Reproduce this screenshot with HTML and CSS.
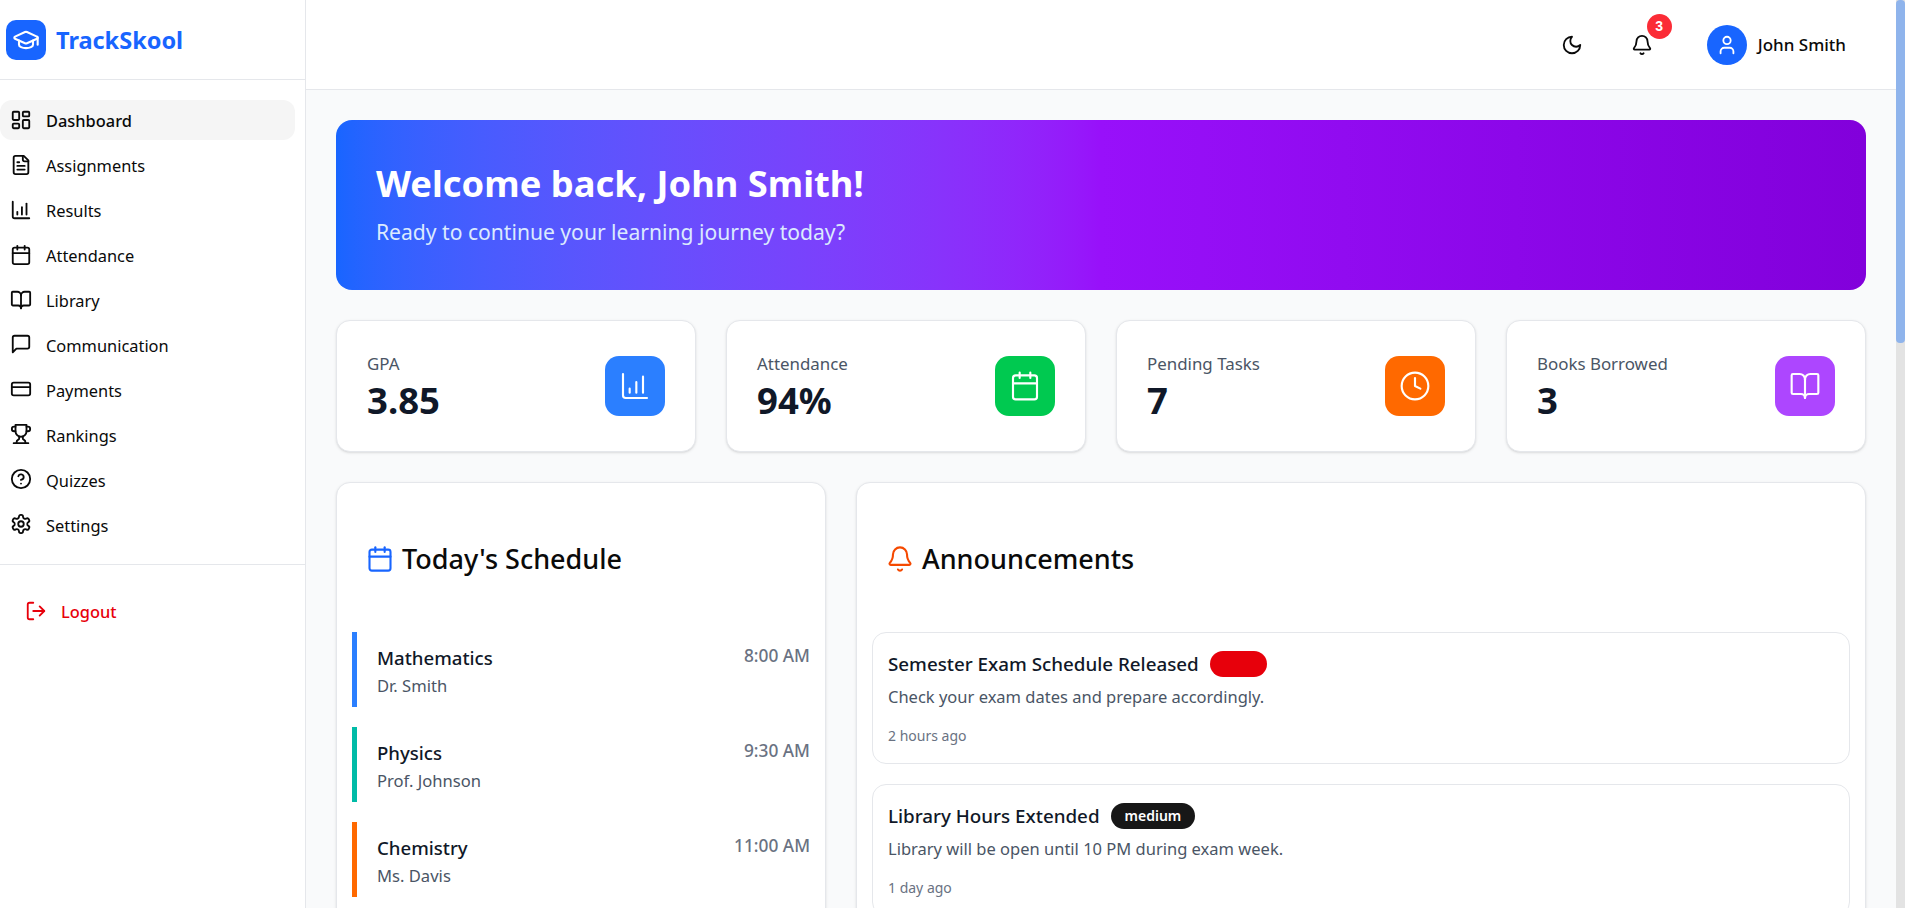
FILE: index.html
```html
<!DOCTYPE html>
<html lang="en">
<head>
	<meta charset="UTF-8">
	<title>TrackSkool</title>
	<link rel="stylesheet" href="styles.css">
</head>
<body>
<div class="app">
	<aside class="sidebar">
		<div class="brand">
			<span class="brand-logo">
				<svg class="icon-28" viewBox="0 0 24 24"><path d="M21.42 10.92a1 1 0 0 0-.02-1.84l-8.57-3.9a2 2 0 0 0-1.66 0l-8.57 3.9a1 1 0 0 0 0 1.83l8.57 3.91a2 2 0 0 0 1.66 0z"/><path d="M22 10v6"/><path d="M6 12.5V16a6 3 0 0 0 12 0v-3.5"/></svg>
			</span>
			<span class="brand-name">TrackSkool</span>
		</div>
		<nav class="nav">
			<a class="nav-item active"><svg class="icon-22" viewBox="0 0 24 24"><rect x="3" y="3" width="7" height="9" rx="1"/><rect x="14" y="3" width="7" height="5" rx="1"/><rect x="14" y="12" width="7" height="9" rx="1"/><rect x="3" y="16" width="7" height="5" rx="1"/></svg><span>Dashboard</span></a>
			<a class="nav-item"><svg class="icon-22" viewBox="0 0 24 24"><path d="M15 2H6a2 2 0 0 0-2 2v16a2 2 0 0 0 2 2h12a2 2 0 0 0 2-2V7z"/><path d="M14 2v4a2 2 0 0 0 2 2h4"/><path d="M10 9H8"/><path d="M16 13H8"/><path d="M16 17H8"/></svg><span>Assignments</span></a>
			<a class="nav-item"><svg class="icon-22" viewBox="0 0 24 24"><path d="M3 3v16a2 2 0 0 0 2 2h16"/><path d="M8 17v-3"/><path d="M13 17V9"/><path d="M18 17V5"/></svg><span>Results</span></a>
			<a class="nav-item"><svg class="icon-22" viewBox="0 0 24 24"><path d="M8 2v4"/><path d="M16 2v4"/><rect x="3" y="4" width="18" height="18" rx="2"/><path d="M3 10h18"/></svg><span>Attendance</span></a>
			<a class="nav-item"><svg class="icon-22" viewBox="0 0 24 24"><path d="M12 7v14"/><path d="M3 18a1 1 0 0 1-1-1V4a1 1 0 0 1 1-1h5a4 4 0 0 1 4 4 4 4 0 0 1 4-4h5a1 1 0 0 1 1 1v13a1 1 0 0 1-1 1h-6a3 3 0 0 0-3 3 3 3 0 0 0-3-3z"/></svg><span>Library</span></a>
			<a class="nav-item"><svg class="icon-22" viewBox="0 0 24 24"><path d="M21 15a2 2 0 0 1-2 2H7l-4 4V5a2 2 0 0 1 2-2h14a2 2 0 0 1 2 2z"/></svg><span>Communication</span></a>
			<a class="nav-item"><svg class="icon-22" viewBox="0 0 24 24"><rect x="2" y="5" width="20" height="14" rx="2"/><path d="M2 10h20"/></svg><span>Payments</span></a>
			<a class="nav-item"><svg class="icon-22" viewBox="0 0 24 24"><path d="M6 9H4.5a2.5 2.5 0 0 1 0-5H6"/><path d="M18 9h1.5a2.5 2.5 0 0 0 0-5H18"/><path d="M4 22h16"/><path d="M10 14.66V17c0 .55-.47.98-.97 1.21C7.85 18.75 7 20.24 7 22"/><path d="M14 14.66V17c0 .55.47.98.97 1.21C16.15 18.75 17 20.24 17 22"/><path d="M18 2H6v7a6 6 0 0 0 12 0V2Z"/></svg><span>Rankings</span></a>
			<a class="nav-item"><svg class="icon-22" viewBox="0 0 24 24"><circle cx="12" cy="12" r="10"/><path d="M9.09 9a3 3 0 0 1 5.83 1c0 2-3 3-3 3"/><path d="M12 17h.01"/></svg><span>Quizzes</span></a>
			<a class="nav-item"><svg class="icon-22" viewBox="0 0 24 24"><path d="M12.22 2h-.44a2 2 0 0 0-2 2v.18a2 2 0 0 1-1 1.73l-.43.25a2 2 0 0 1-2 0l-.15-.08a2 2 0 0 0-2.73.73l-.22.38a2 2 0 0 0 .73 2.73l.15.1a2 2 0 0 1 1 1.72v.51a2 2 0 0 1-1 1.74l-.15.09a2 2 0 0 0-.73 2.73l.22.38a2 2 0 0 0 2.73.73l.15-.08a2 2 0 0 1 2 0l.43.25a2 2 0 0 1 1 1.73V20a2 2 0 0 0 2 2h.44a2 2 0 0 0 2-2v-.18a2 2 0 0 1 1-1.73l.43-.25a2 2 0 0 1 2 0l.15.08a2 2 0 0 0 2.73-.73l.22-.39a2 2 0 0 0-.73-2.73l-.15-.08a2 2 0 0 1-1-1.74v-.5a2 2 0 0 1 1-1.74l.15-.09a2 2 0 0 0 .73-2.73l-.22-.38a2 2 0 0 0-2.73-.73l-.15.08a2 2 0 0 1-2 0l-.43-.25a2 2 0 0 1-1-1.73V4a2 2 0 0 0-2-2z"/><circle cx="12" cy="12" r="3"/></svg><span>Settings</span></a>
		</nav>
		<div class="logout-wrap">
			<a class="logout"><svg class="icon-22" viewBox="0 0 24 24"><path d="M9 21H5a2 2 0 0 1-2-2V5a2 2 0 0 1 2-2h4"/><path d="m16 17 5-5-5-5"/><path d="M21 12H9"/></svg>Logout</a>
		</div>
	</aside>

	<div class="content">
		<header class="topbar">
			<button class="top-btn"><svg class="icon-22" viewBox="0 0 24 24"><path d="M12 3a6 6 0 0 0 9 9 9 9 0 1 1-9-9Z"/></svg></button>
			<button class="top-btn bell">
				<svg class="icon-22" viewBox="0 0 24 24"><path d="M10.268 21a2 2 0 0 0 3.464 0"/><path d="M3.262 15.326A1 1 0 0 0 4 17h16a1 1 0 0 0 .74-1.673C19.41 13.956 18 12.499 18 8A6 6 0 0 0 6 8c0 4.499-1.411 5.956-2.738 7.326"/></svg>
				<span class="badge-count">3</span>
			</button>
			<div class="user">
				<span class="avatar"><svg class="icon-22" viewBox="0 0 24 24"><path d="M19 21v-2a4 4 0 0 0-4-4H9a4 4 0 0 0-4 4v2"/><circle cx="12" cy="7" r="4"/></svg></span>
				<span class="user-name">John Smith</span>
			</div>
		</header>

		<main class="main">
			<section class="welcome">
				<h1>Welcome back, John Smith!</h1>
				<p>Ready to continue your learning journey today?</p>
			</section>

			<section class="stats">
				<div class="stat">
					<div><div class="stat-label">GPA</div><div class="stat-value">3.85</div></div>
					<span class="stat-icon blue"><svg class="icon-32" viewBox="0 0 24 24"><path d="M3 3v16a2 2 0 0 0 2 2h16"/><path d="M8 17v-3"/><path d="M13 17V9"/><path d="M18 17V5"/></svg></span>
				</div>
				<div class="stat">
					<div><div class="stat-label">Attendance</div><div class="stat-value">94%</div></div>
					<span class="stat-icon green"><svg class="icon-32" viewBox="0 0 24 24"><path d="M8 2v4"/><path d="M16 2v4"/><rect x="3" y="4" width="18" height="18" rx="2"/><path d="M3 10h18"/></svg></span>
				</div>
				<div class="stat">
					<div><div class="stat-label">Pending Tasks</div><div class="stat-value">7</div></div>
					<span class="stat-icon orange"><svg class="icon-32" viewBox="0 0 24 24"><circle cx="12" cy="12" r="10"/><path d="M12 6v6l4 2"/></svg></span>
				</div>
				<div class="stat">
					<div><div class="stat-label">Books Borrowed</div><div class="stat-value">3</div></div>
					<span class="stat-icon purple"><svg class="icon-32" viewBox="0 0 24 24"><path d="M12 7v14"/><path d="M3 18a1 1 0 0 1-1-1V4a1 1 0 0 1 1-1h5a4 4 0 0 1 4 4 4 4 0 0 1 4-4h5a1 1 0 0 1 1 1v13a1 1 0 0 1-1 1h-6a3 3 0 0 0-3 3 3 3 0 0 0-3-3z"/></svg></span>
				</div>
			</section>

			<section class="columns">
				<div class="panel">
					<h2 class="panel-title"><svg class="icon-28 c-blue" viewBox="0 0 24 24"><path d="M8 2v4"/><path d="M16 2v4"/><rect x="3" y="4" width="18" height="18" rx="2"/><path d="M3 10h18"/></svg>Today's Schedule</h2>
					<div class="panel-body schedule">
						<div class="lesson l-blue">
							<div><div class="lesson-name">Mathematics</div><div class="lesson-teacher">Dr. Smith</div></div>
							<div class="lesson-time">8:00 AM</div>
						</div>
						<div class="lesson l-teal">
							<div><div class="lesson-name">Physics</div><div class="lesson-teacher">Prof. Johnson</div></div>
							<div class="lesson-time">9:30 AM</div>
						</div>
						<div class="lesson l-orange">
							<div><div class="lesson-name">Chemistry</div><div class="lesson-teacher">Ms. Davis</div></div>
							<div class="lesson-time">11:00 AM</div>
						</div>
					</div>
				</div>
				<div class="panel">
					<h2 class="panel-title"><svg class="icon-28 c-orange" viewBox="0 0 24 24"><path d="M10.268 21a2 2 0 0 0 3.464 0"/><path d="M3.262 15.326A1 1 0 0 0 4 17h16a1 1 0 0 0 .74-1.673C19.41 13.956 18 12.499 18 8A6 6 0 0 0 6 8c0 4.499-1.411 5.956-2.738 7.326"/></svg>Announcements</h2>
					<div class="panel-body notes">
						<div class="note">
							<div class="note-head"><span class="note-title">Semester Exam Schedule Released</span><span class="tag tag-high"></span></div>
							<p class="note-text">Check your exam dates and prepare accordingly.</p>
							<div class="note-time">2 hours ago</div>
						</div>
						<div class="note">
							<div class="note-head"><span class="note-title">Library Hours Extended</span><span class="tag tag-medium">medium</span></div>
							<p class="note-text">Library will be open until 10 PM during exam week.</p>
							<div class="note-time">1 day ago</div>
						</div>
					</div>
				</div>
			</section>
		</main>
	</div>

	<div class="scrollbar"><div class="scrollbar-thumb"></div></div>
</div>
</body>
</html>
```

FILE: styles.css
```css
* {
	margin: 0;
	padding: 0;
	box-sizing: border-box;
}
html, body {
	height: 100%;
	overflow: hidden;
}
body {
	font-family: "Noto Sans", "Open Sans", sans-serif;
	color: #0a0a0a;
	background: #f9fafb;
}
svg {
	fill: none;
	stroke: currentColor;
	stroke-width: 2;
	stroke-linecap: round;
	stroke-linejoin: round;
	flex-shrink: 0;
}
.icon-22 { width: 22px; height: 22px; }
.icon-28 { width: 28px; height: 28px; stroke-width: 1.8; }
.icon-32 { width: 32px; height: 32px; stroke-width: 1.6; }
.c-blue { color: #1865ff; }
.c-orange { color: #f54900; }

.app {
	display: flex;
	height: 908px;
	overflow: hidden;
}

/* sidebar */
.sidebar {
	width: 306px;
	flex-shrink: 0;
	background: #fff;
	border-right: 1px solid #e5e7eb;
}
.brand {
	display: flex;
	align-items: center;
	gap: 10px;
	height: 80px;
	padding-left: 6px;
	border-bottom: 1px solid #e5e7eb;
}
.brand-logo {
	display: flex;
	align-items: center;
	justify-content: center;
	width: 40px;
	height: 40px;
	border-radius: 10px;
	background: #1865ff;
	color: #fff;
}
.brand-name {
	font-size: 23.5px;
	font-weight: 700;
	color: #1865ff;
}
.nav {
	display: flex;
	flex-direction: column;
	gap: 5px;
	height: 485px;
	padding: 20px 10px 20px 0;
	border-bottom: 1px solid #e5e7eb;
}
.nav-item {
	display: flex;
	align-items: center;
	gap: 14px;
	height: 40px;
	padding-left: 10px;
	border-radius: 12px;
	font-size: 16.4px;
	color: #0a0a0a;
}
.nav-item span {
	padding-top: 2px;
}
.nav-item.active {
	background: #f5f5f5;
	font-weight: 500;
}
.logout-wrap {
	padding: 26px 25px;
}
.logout {
	display: flex;
	align-items: center;
	gap: 14px;
	height: 40px;
	font-size: 16.4px;
	font-weight: 500;
	color: #e7000b;
}

/* top bar */
.content {
	flex: 1;
	min-width: 0;
}
.topbar {
	display: flex;
	align-items: center;
	justify-content: flex-end;
	gap: 30px;
	height: 90px;
	padding-right: 50px;
	background: #fff;
	border-bottom: 1px solid #e5e7eb;
}
.top-btn {
	position: relative;
	display: flex;
	align-items: center;
	justify-content: center;
	width: 40px;
	height: 40px;
	border: 0;
	background: none;
	color: #0a0a0a;
}
.badge-count {
	position: absolute;
	top: -11px;
	right: -10px;
	display: flex;
	align-items: center;
	justify-content: center;
	width: 25px;
	height: 25px;
	border-radius: 50%;
	background: #fb2c36;
	color: #fff;
	font-size: 14px;
	font-weight: 700;
}
.user {
	display: flex;
	align-items: center;
	gap: 11px;
	margin-left: 15px;
}
.avatar {
	display: flex;
	align-items: center;
	justify-content: center;
	width: 40px;
	height: 40px;
	border-radius: 50%;
	background: #1865ff;
	color: #fff;
}
.user-name {
	font-size: 17px;
	font-weight: 500;
}

/* main */
.main {
	padding: 30px;
}
.welcome {
	height: 170px;
	padding: 43px 40px 0;
	border-radius: 16px;
	background: linear-gradient(to right in oklab, #1865ff, #9810fa 50%, #8200db);
	color: #fff;
}
.welcome h1 {
	font-size: 36.3px;
	font-weight: 700;
	line-height: 40px;
	margin-bottom: 15px;
}
.welcome p {
	font-size: 21.1px;
	line-height: 28px;
	color: #dbeafe;
}
.stats {
	display: grid;
	grid-template-columns: repeat(4, 1fr);
	gap: 30px;
	margin-top: 30px;
}
.stat {
	display: flex;
	align-items: center;
	justify-content: space-between;
	height: 132px;
	padding: 0 30px;
	background: #fff;
	border: 1px solid #e5e7eb;
	border-radius: 14px;
	box-shadow: 0 1px 3px rgba(0, 0, 0, .1), 0 1px 2px -1px rgba(0, 0, 0, .1);
}
.stat-label {
	font-size: 16.9px;
	line-height: 24px;
	margin-bottom: 4px;
	color: #4a5565;
}
.stat-value {
	font-size: 36.5px;
	font-weight: 700;
	line-height: 40px;
	color: #101828;
}
.stat-icon {
	display: flex;
	align-items: center;
	justify-content: center;
	width: 60px;
	height: 60px;
	border-radius: 14px;
	color: #fff;
}
.blue { background: #2b7fff; }
.green { background: #00c950; }
.orange { background: #ff6900; }
.purple { background: #ad46ff; }

.columns {
	display: grid;
	grid-template-columns: 490px 1fr;
	gap: 30px;
	margin-top: 30px;
}
.panel {
	height: 700px;
	background: #fff;
	border: 1px solid #e5e7eb;
	border-radius: 14px;
	box-shadow: 0 1px 3px rgba(0, 0, 0, .1), 0 1px 2px -1px rgba(0, 0, 0, .1);
}
.panel-title {
	display: flex;
	align-items: center;
	gap: 8px;
	padding: 58px 29px 0;
	font-size: 27px;
	font-weight: 500;
	line-height: 36px;
}
.panel-body {
	padding: 0 15px;
	margin-top: 55px;
}

.lesson {
	display: flex;
	justify-content: space-between;
	height: 75px;
	margin-bottom: 20px;
	padding-left: 20px;
	border-left: 5px solid;
}
.l-blue { border-color: #2b7fff; }
.l-teal { border-color: #00bba7; }
.l-orange { border-color: #ff6900; }
.lesson-name {
	margin-top: 12px;
	font-size: 18.6px;
	font-weight: 500;
	line-height: 28px;
	color: #101828;
}
.lesson-teacher {
	margin-top: 2px;
	font-size: 16.6px;
	line-height: 24px;
	color: #4a5565;
}
.lesson-time {
	margin-top: 12px;
	font-size: 17.3px;
	font-weight: 500;
	line-height: 24px;
	color: #6a7282;
}

.note {
	height: 132px;
	margin-bottom: 20px;
	padding: 15px;
	border: 1px solid #e5e7eb;
	border-radius: 14px;
}
.note-head {
	display: flex;
	align-items: center;
	gap: 11px;
	margin-top: 2px;
}
.note-title {
	font-size: 18.8px;
	font-weight: 500;
	line-height: 28px;
	color: #101828;
}
.tag {
	display: inline-block;
	min-width: 57px;
	height: 26px;
	padding: 0 14px;
	border-radius: 13px;
	font-size: 14px;
	font-weight: 600;
	line-height: 26px;
	color: #fff;
}
.tag-high { background: #e7000b; }
.tag-medium { background: #171717; }
.note-text {
	margin-top: 7px;
	font-size: 16.5px;
	line-height: 24px;
	color: #4a5565;
}
.note-time {
	margin-top: 17px;
	font-size: 14px;
	line-height: 20px;
	color: #6a7282;
}

/* scrollbar of the page */
.scrollbar {
	width: 9px;
	flex-shrink: 0;
	background: #e3e3e3;
}
.scrollbar-thumb {
	height: 343px;
	border-radius: 4px;
	background: #8fb4ec;
}
```
